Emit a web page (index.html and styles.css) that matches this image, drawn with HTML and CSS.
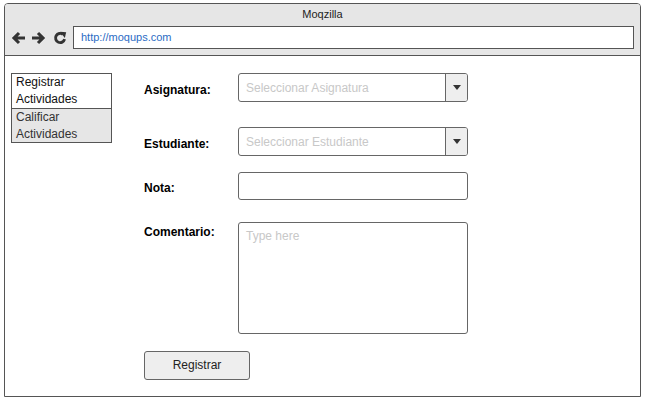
FILE: index.html
```html
<!DOCTYPE html>
<html>
<head>
<meta charset="utf-8">
<link rel="stylesheet" href="styles.css">
</head>
<body>
<div class="window">
  <div class="chrome">
    <div class="title">Moqzilla</div>
    <div class="toolbar">
      <svg class="icon" width="14" height="14" viewBox="0 0 14 14"><path d="M14 7H3.5 M8 2L3 7L8 12" fill="none" stroke="#333" stroke-width="3.1"/></svg>
      <svg class="icon" width="14" height="14" viewBox="0 0 14 14"><path d="M0 7H10.5 M6 2L11 7L6 12" fill="none" stroke="#333" stroke-width="3.1"/></svg>
      <svg class="icon last" width="14" height="14" viewBox="0 0 14 14"><path d="M11.6 8.2A4.6 4.6 0 1 1 9.9 3.3" fill="none" stroke="#333" stroke-width="2.9"/><path d="M7.2 0.8L13.2 1.2L11.8 7Z" fill="#333"/></svg>
      <div class="url">http://moqups.com</div>
    </div>
  </div>
  <div class="content">
    <div class="nav">
      <div class="nav-item">Registrar<br>Actividades</div>
      <div class="nav-item active">Calificar<br>Actividades</div>
    </div>
    <div class="form">
      <div class="row r1">
        <div class="label">Asignatura:</div>
        <div class="select"><span class="ph">Seleccionar Asignatura</span><span class="caret"><svg width="8" height="5" viewBox="0 0 8 5"><path d="M0 0H8L4 5Z" fill="#333"/></svg></span></div>
      </div>
      <div class="row r2">
        <div class="label">Estudiante:</div>
        <div class="select"><span class="ph">Seleccionar Estudiante</span><span class="caret"><svg width="8" height="5" viewBox="0 0 8 5"><path d="M0 0H8L4 5Z" fill="#333"/></svg></span></div>
      </div>
      <div class="row r3">
        <div class="label">Nota:</div>
        <div class="input"></div>
      </div>
      <div class="row r4">
        <div class="label top">Comentario:</div>
        <div class="textarea"><span class="ph">Type here</span></div>
      </div>
      <div class="btn">Registrar</div>
    </div>
  </div>
</div>
</body>
</html>
```

FILE: styles.css
```css
* { box-sizing: border-box; }
html, body { margin: 0; padding: 0; background: #fff; }
body { font-family: "Liberation Sans", Arial, sans-serif; font-size: 12px; color: #000; }

.window {
  margin: 3px 0 0 4px;
  width: 637px;
  height: 394px;
  border: 1px solid #555;
  border-radius: 4px 4px 0 0;
  overflow: hidden;
  display: flex;
  flex-direction: column;
}
.chrome {
  background: #e6e6e6;
  border-bottom: 1px solid #555;
  height: 52px;
}
.title {
  text-align: center;
  font-size: 11px;
  line-height: 13px;
  padding-top: 4px;
  color: #222;
}
.toolbar {
  display: flex;
  align-items: center;
  padding: 5px 6px 0 6px;
  height: 28px;
}
.icon { flex: none; margin-right: 7px; }
.icon.last { margin-right: 6px; }
.url {
  flex: 1;
  height: 23px;
  background: #fff;
  border: 1px solid #555;
  font-size: 11px;
  line-height: 21px;
  padding-left: 7px;
  color: #2b6cc4;
}
.content {
  display: flex;
  padding: 17px 0 0 6px;
}
.nav {
  width: 101px;
  height: 70px;
  border: 1px solid #555;
  flex: none;
}
.nav-item {
  height: 34px;
  padding: 0 0 0 4px;
  line-height: 17px;
  font-size: 12px;
  color: #111;
}
.nav-item.active {
  background: #e6e6e6;
  border-top: 1px solid #555;
  color: #333;
}
.form {
  margin-left: 32px;
  display: flex;
  flex-direction: column;
}
.row { display: flex; align-items: center; }
.label {
  width: 94px;
  font-weight: bold;
  font-size: 12px;
  padding-top: 4px;
}
.label.top { align-self: flex-start; padding-top: 3px; }
.r2 { margin-top: 25px; }
.r3 { margin-top: 16px; }
.r4 { margin-top: 22px; }
.select, .input, .textarea {
  width: 230px;
  border: 1px solid #666;
  border-radius: 3px;
  background: #fff;
}
.select {
  height: 29px;
  display: flex;
  align-items: center;
  overflow: hidden;
}
.select .ph { flex: 1; padding-left: 7px; }
.ph { color: #c8c8c8; font-size: 12px; }
.caret {
  width: 22px;
  height: 100%;
  border-left: 1px solid #666;
  background: #eee;
  display: flex;
  align-items: center;
  justify-content: center;
}
.input { height: 28px; }
.textarea { height: 112px; padding: 6px 7px; }
.btn {
  margin-top: 17px;
  width: 106px;
  height: 29px;
  border: 1px solid #666;
  border-radius: 3px;
  background: #eee;
  text-align: center;
  line-height: 27px;
  font-size: 12px;
  color: #222;
}
```
